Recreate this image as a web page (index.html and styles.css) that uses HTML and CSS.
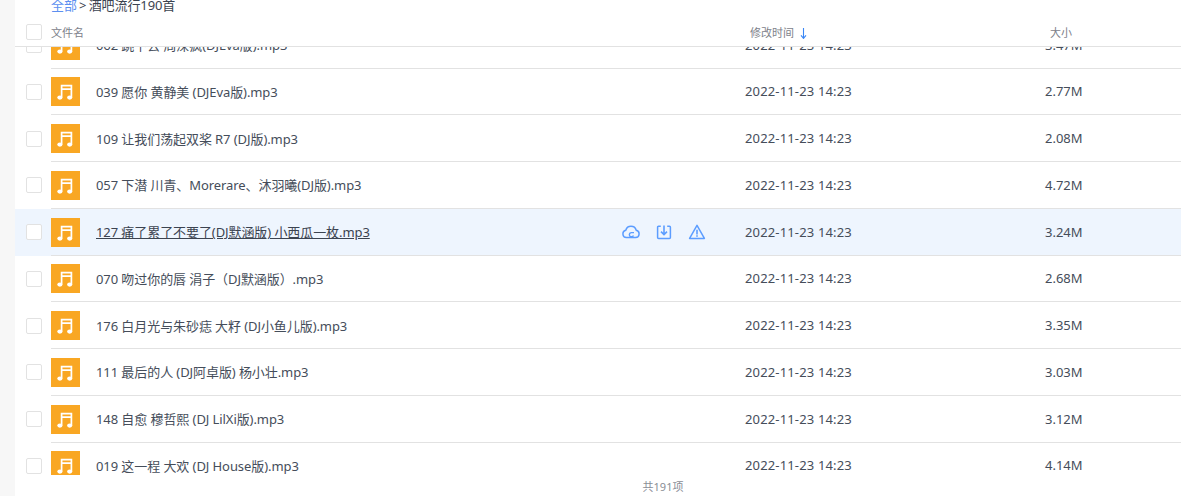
FILE: index.html
```html
<!DOCTYPE html>
<html lang="zh-CN">
<head>
<meta charset="utf-8">
<title>酒吧流行190首</title>
<link rel="stylesheet" href="styles.css">
</head>
<body>
<svg class="defs" width="0" height="0" aria-hidden="true">
  <symbol id="note" viewBox="0 0 29 29">
    <path d="M10.6 20.2V8.6h9.8v11.6M10.6 12.2h9.8" fill="none" stroke="#fff" stroke-width="1.7"/>
    <ellipse cx="8.9" cy="20.6" rx="2.6" ry="2.1" fill="#fff"/>
    <ellipse cx="18.7" cy="20.6" rx="2.6" ry="2.1" fill="#fff"/>
  </symbol>
</svg>
<div class="app">
  <div class="gutter"></div>
  <main class="main">
    <div class="crumbs"><a class="crumb-link">全部</a> &gt; 酒吧流行190首</div>
    <div class="head">
      <span class="check"></span>
      <span class="col-name">文件名</span>
      <span class="col-time">修改时间<svg class="sort" viewBox="0 0 7 11"><path d="M3.5 0v10M1 7.4l2.5 3 2.5-3" fill="none" stroke="#3b87f5" stroke-width="1.1"/></svg></span>
      <span class="col-size">大小</span>
    </div>
    <div class="viewport">
      <ul class="list">
        <li class="row"><span class="check"></span><svg class="file"><use href="#note"/></svg><span class="col-name">062 跳下去 周深疯(DJEva版).mp3</span><span class="col-time">2022-11-23 14:23</span><span class="col-size">3.47M</span></li>
        <li class="row"><span class="check"></span><svg class="file"><use href="#note"/></svg><span class="col-name">039 愿你 黄静美 (DJEva版).mp3</span><span class="col-time">2022-11-23 14:23</span><span class="col-size">2.77M</span></li>
        <li class="row"><span class="check"></span><svg class="file"><use href="#note"/></svg><span class="col-name">109 让我们荡起双桨 R7 (DJ版).mp3</span><span class="col-time">2022-11-23 14:23</span><span class="col-size">2.08M</span></li>
        <li class="row"><span class="check"></span><svg class="file"><use href="#note"/></svg><span class="col-name">057 下潜 川青、Morerare、沐羽曦(DJ版).mp3</span><span class="col-time">2022-11-23 14:23</span><span class="col-size">4.72M</span></li>
        <li class="row row-active"><span class="check"></span><svg class="file"><use href="#note"/></svg><span class="col-name name-link">127 痛了累了不要了(DJ默涵版) 小西瓜一枚.mp3</span>
          <span class="actions">
            <svg class="act" viewBox="0 0 18 18"><path d="M4.4 14.6a3.700 3.700 0 0 1-.6-7.300 5.400 5.400 0 0 1 10.400 0 3.700 3.700 0 0 1-.6 7.300z" fill="none" stroke="#5c9dff" stroke-width="1.500" stroke-linejoin="round"/><path d="M12 9.600H9.200a2.100 2.100 0 1 0 2.200 2.800" fill="none" stroke="#5c9dff" stroke-width="1.400"/></svg>
            <svg class="act" viewBox="0 0 18 18"><path d="M5.800 3.200H3.600a1 1 0 0 0-1 1v10.200a1 1 0 0 0 1 1h10.800a1 1 0 0 0 1-1V4.200a1 1 0 0 0-1-1h-2.200" fill="none" stroke="#5c9dff" stroke-width="1.500"/><path d="M9 2.400v9M6 8.600l3 3 3-3" fill="none" stroke="#5c9dff" stroke-width="1.600"/></svg>
            <svg class="act" viewBox="0 0 18 18"><path d="M9 2.400 16.400 15.400H1.600z" fill="none" stroke="#5c9dff" stroke-width="1.500" stroke-linejoin="round"/><path d="M9 6.800v4.600M9 12.300v1.500" fill="none" stroke="#5c9dff" stroke-width="1.600"/></svg>
          </span>
          <span class="col-time">2022-11-23 14:23</span><span class="col-size">3.24M</span></li>
        <li class="row"><span class="check"></span><svg class="file"><use href="#note"/></svg><span class="col-name">070 吻过你的唇 涓子（DJ默涵版）.mp3</span><span class="col-time">2022-11-23 14:23</span><span class="col-size">2.68M</span></li>
        <li class="row"><span class="check"></span><svg class="file"><use href="#note"/></svg><span class="col-name">176 白月光与朱砂痣 大籽 (DJ小鱼儿版).mp3</span><span class="col-time">2022-11-23 14:23</span><span class="col-size">3.35M</span></li>
        <li class="row"><span class="check"></span><svg class="file"><use href="#note"/></svg><span class="col-name">111 最后的人 (DJ阿卓版) 杨小壮.mp3</span><span class="col-time">2022-11-23 14:23</span><span class="col-size">3.03M</span></li>
        <li class="row"><span class="check"></span><svg class="file"><use href="#note"/></svg><span class="col-name">148 自愈 穆哲熙 (DJ LilXi版).mp3</span><span class="col-time">2022-11-23 14:23</span><span class="col-size">3.12M</span></li>
        <li class="row"><span class="check"></span><svg class="file"><use href="#note"/></svg><span class="col-name">019 这一程 大欢 (DJ House版).mp3</span><span class="col-time">2022-11-23 14:23</span><span class="col-size">4.14M</span></li>
      </ul>
    </div>
    <div class="total">共191项</div>
  </main>
</div>
</body>
</html>
```
FILE: styles.css
```css
* { box-sizing: border-box; }
html, body { margin: 0; height: 100%; overflow: hidden; background: #fff; }
body {
  font-family: "Noto Sans", "Noto Sans CJK SC", sans-serif;
  font-size: 13px;
  color: #454d5a;
}
.defs { position: absolute; }
.app { display: flex; height: 496px; }
.gutter { width: 15px; flex: none; background: #f7f7f7; }
.main { flex: 1; min-width: 0; display: flex; flex-direction: column; }
.crumbs { height: 23px; margin-top: -3px; padding-left: 36px; font-size: 13px; line-height: 17px; color: #3b4350; letter-spacing: -.1px; word-spacing: -1px; }
.crumb-link { color: #5c8ff0; }
.head { height: 27px; flex: none; display: flex; align-items: center; padding-bottom: 3px; border-bottom: 1px solid #e2e2e2; font-size: 11px; color: #7d818a; }
.sort { width: 7px; height: 11px; margin-left: 6px; vertical-align: -2px; }
.viewport { height: 428px; flex: none; overflow: hidden; }
.list { list-style: none; margin: -25.25px 0 0; padding: 0; }
.row { height: 46.75px; display: flex; align-items: center; position: relative; }
.row::after { content: ""; position: absolute; left: 36px; right: 0; bottom: 0; height: 1px; background: #e2e2e2; }
.row-active { background: #eef5fe; }
.check { width: 16px; height: 16px; margin-left: 11px; flex: none; border: 1px solid #e2e2e2; border-radius: 2px; background: #fff; }
.file { width: 29px; height: 29px; margin-left: 9px; flex: none; background: #f9a723; }
.row .col-name { margin-left: 16px; width: 649px; flex: none; letter-spacing: -.08px; }
.head .col-name { margin-left: 9px; width: 699px; flex: none; }
.col-time { width: 300px; flex: none; }
.row .col-time { letter-spacing: .15px; margin-bottom: 1px; }
.row .col-name, .row .col-size { margin-bottom: 1px; }
.col-size { flex: none; }
.name-link { text-decoration: underline; color: #3b4350; }
.row-active .col-name { width: 526px; }
.actions { width: 123px; flex: none; display: flex; gap: 15px; }
.act { width: 18px; height: 18px; flex: none; }
.total { padding-left: 130px; text-align: center; font-size: 11px; color: #8a8e96; margin-top: 3px; }
```
